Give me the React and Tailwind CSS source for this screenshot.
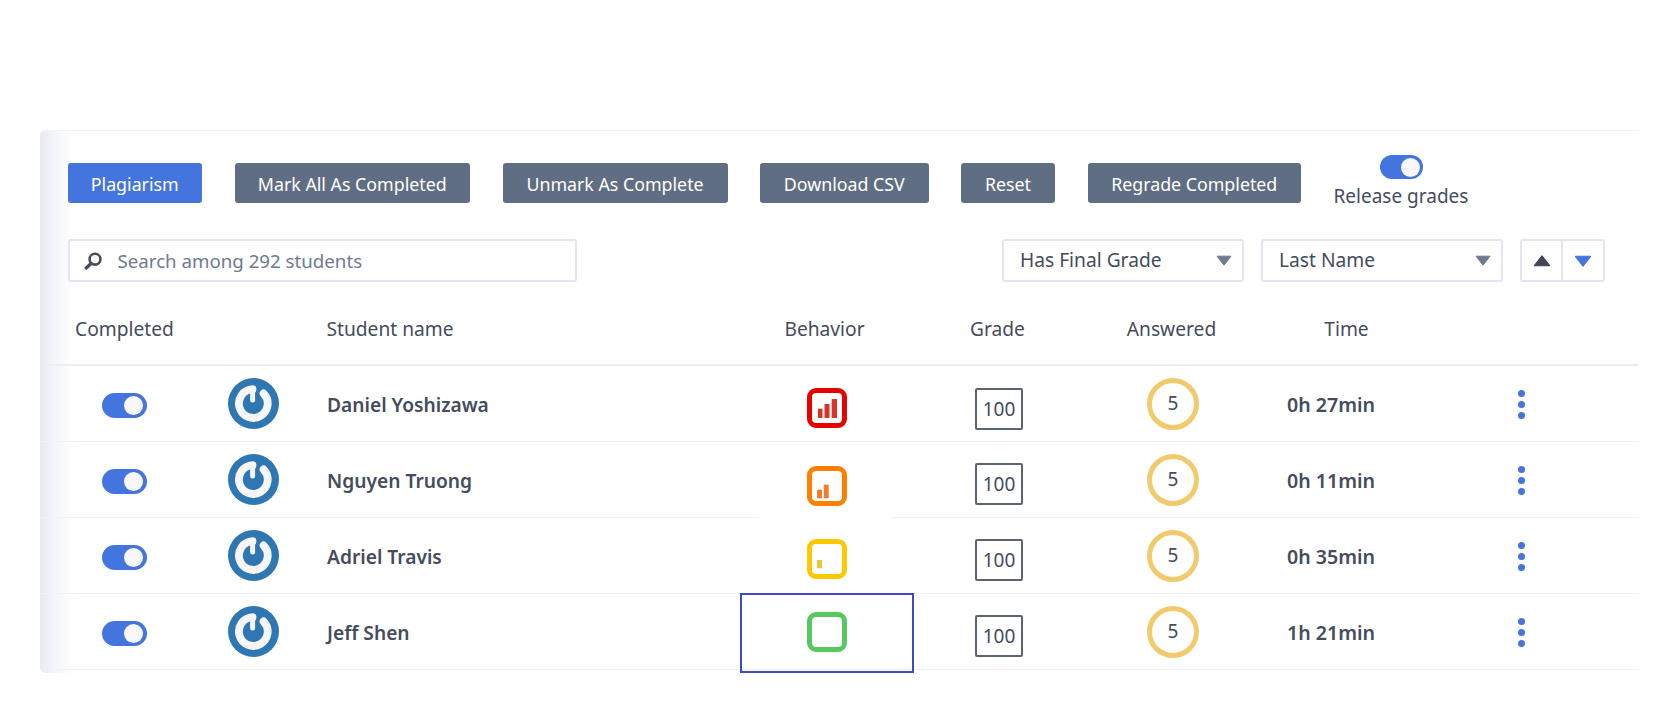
import React from "react";

function Toggle() {
  return (
    <div className="flex h-[25px] w-[45px] items-center justify-end rounded-full bg-[#4475df] pr-[4px]">
      <div className="h-[19px] w-[19px] rounded-full bg-[#f8f8fa]" />
    </div>
  );
}

function Gravatar() {
  return (
    <svg width="51" height="51" viewBox="0 0 51 51" className="block">
      <circle cx="25.5" cy="25.5" r="25.5" fill="#2e77b3" />
      <path d="M35.6 15.4 A14.4 14.4 0 1 1 24.6 11.1" fill="none" stroke="#f6f6f6" strokeWidth="7.8" strokeLinecap="round" />
      <path d="M24.6 10.5 L24.6 22" fill="none" stroke="#f6f6f6" strokeWidth="5" strokeLinecap="round" />
    </svg>
  );
}

function Behavior({ color, barColor, bars }) {
  return (
    <svg width="40" height="40" viewBox="0 0 40 40" className="block">
      <rect x="2.5" y="2.5" width="35" height="35" rx="6.5" fill="#fff" stroke={color} strokeWidth="5" />
      {bars.map((b, i) => (
        <rect key={i} x={b[0]} y={b[1]} width={b[2]} height={b[3]} fill={barColor} />
      ))}
    </svg>
  );
}

function Dots() {
  return (
    <div className="mt-[2px] flex flex-col gap-[4px]">
      <div className="h-[7px] w-[7px] rounded-full bg-[#4475df]" />
      <div className="h-[7px] w-[7px] rounded-full bg-[#4475df]" />
      <div className="h-[7px] w-[7px] rounded-full bg-[#4475df]" />
    </div>
  );
}

function Caret({ className }) {
  return (
    <svg width="16" height="11" viewBox="0 0 16 11" className={className}>
      <path d="M1 1.2 H15 L8 10.2 Z" fill="currentColor" stroke="currentColor" strokeWidth="1" strokeLinejoin="round" />
    </svg>
  );
}

function Btn({ w, blue, children }) {
  return (
    <button className={`flex h-[40px] items-center justify-center rounded-[3px] pt-[2px] text-[17.8px] text-white ${w} ${blue ? "bg-[#4475df]" : "bg-[#606e84]"}`}>
      {children}
    </button>
  );
}

function Select({ label }) {
  return (
    <div className="flex h-[43px] w-[242px] items-center justify-between rounded-[3px] border-2 border-[#e3e6f0] pl-[16px] pr-[10px] text-[19.2px] text-[#454c5b]">
      <span>{label}</span>
      <Caret className="text-[#6f7a90]" />
    </div>
  );
}

const rows = [
  {
    name: "Daniel Yoshizawa", time: "0h 27min", color: "#e60000", barColor: "#d9332a",
    bars: [[11, 20.7, 4.5, 9.3], [17.5, 16, 5, 14], [24.7, 11, 5.3, 19]],
    bMt: "mt-[8px]", gMt: "mt-[11px]",
  },
  {
    name: "Nguyen Truong", time: "0h 11min", color: "#ff7f00", barColor: "#ee7d33",
    bars: [[10, 23.7, 5, 8.6], [16.7, 18.7, 5, 13.6]],
    bMt: "mt-[13px]", gMt: "mt-[9px]", patch: true,
  },
  {
    name: "Adriel Travis", time: "0h 35min", color: "#fcc800", barColor: "#f2c33f",
    bars: [[10, 21, 5, 8.3]],
    bMt: "mt-[7px]", gMt: "mt-[9px]",
  },
  {
    name: "Jeff Shen", time: "1h 21min", color: "#56c85f", barColor: "#56c85f",
    bars: [],
    bMt: "mt-0", gMt: "mt-[9px]", selected: true,
  },
];

export default function App() {
  return (
    <div className="min-h-[713px] bg-white pl-[40px] pt-[130px] font-['Noto_Sans',sans-serif] text-[#454c5b]">
      <div className="flex h-[543px] w-[1599px] flex-col rounded-l-[6px] border-t border-[#f1f2f5] bg-[linear-gradient(90deg,#e8eaf1,#f6f7fa_18px,#ffffff_34px)] pt-[24px]">
        {/* toolbar */}
        <div className="flex h-[53px] items-start gap-[32.5px] pl-[27.5px]">
          <div className="mt-[8px] flex gap-[32.5px]">
            <Btn w="w-[134.5px]" blue>Plagiarism</Btn>
            <Btn w="w-[235.5px]">Mark All As Completed</Btn>
            <Btn w="w-[225px]">Unmark As Complete</Btn>
            <Btn w="w-[168.5px]">Download CSV</Btn>
            <Btn w="w-[94px]">Reset</Btn>
            <Btn w="w-[213.5px]">Regrade Completed</Btn>
          </div>
          <div className="flex w-[135px] flex-col items-center whitespace-nowrap">
            <div className="flex h-[24px] w-[43px] items-center justify-end rounded-full bg-[#4475df] pr-[3px]">
              <div className="h-[19px] w-[19px] rounded-full bg-[#f8f8fa]" />
            </div>
            <div className="mt-[4px] text-[19px] leading-[26px]">Release grades</div>
          </div>
        </div>

        {/* filters */}
        <div className="mt-[31px] flex h-[43px] items-center pl-[27.5px]">
          <div className="flex h-[43px] w-[509px] items-center rounded-[3px] border-2 border-[#e3e6f0] pl-[14px] text-[18.7px] text-[#6f7a90]">
            <svg width="19" height="18" viewBox="0 0 19 18" className="block">
              <circle cx="11" cy="7.2" r="5.4" fill="none" stroke="#454c5b" strokeWidth="2.6" />
              <path d="M7 11.5 L2.2 16" stroke="#454c5b" strokeWidth="3.2" strokeLinecap="round" />
            </svg>
            <span className="ml-[15px] pt-[1px]">Search among 292 students</span>
          </div>
          <div className="ml-[425.5px] flex gap-[17px]">
            <Select label="Has Final Grade" />
            <Select label="Last Name" />
            <div className="flex h-[43px] w-[85px] rounded-[3px] border-2 border-[#e3e6f0]">
              <div className="flex w-[41px] items-center justify-center border-r-2 border-[#e3e6f0]">
                <Caret className="h-[12px] w-[18px] rotate-180 text-[#3f4654]" />
              </div>
              <div className="flex flex-1 items-center justify-center">
                <Caret className="h-[12px] w-[18px] text-[#4475df]" />
              </div>
            </div>
          </div>
        </div>

        {/* table header */}
        <div className="flex h-[84px] shrink-0 items-center border-b-2 border-[#eceef3] pt-[13px] text-[19.2px]">
          <div className="w-[286.5px] pl-[35px]">Completed</div>
          <div className="w-[400px]">Student name</div>
          <div className="w-[196px] text-center">Behavior</div>
          <div className="w-[150px] text-center">Grade</div>
          <div className="w-[198px] text-center">Answered</div>
          <div className="w-[152px] text-center">Time</div>
        </div>

        {/* rows */}
        {rows.map((r) => (
          <div key={r.name} className="relative flex h-[76px] shrink-0 items-center border-b border-[#f1f2f5]">
            <div className="mt-[4px] w-[188px] pl-[62px]">
              <Toggle />
            </div>
            <div className="w-[99px]">
              <Gravatar />
            </div>
            <div className="mt-[3px] w-[400px] text-[19.2px] font-semibold">{r.name}</div>
            <div className={`flex w-[200px] justify-center ${r.bMt}`}>
              <Behavior color={r.color} barColor={r.barColor} bars={r.bars} />
            </div>
            <div className={`flex w-[144px] justify-center ${r.gMt}`}>
              <div className="flex h-[42px] w-[48px] items-center justify-center rounded-[2px] border-2 border-[#5b6472] text-[19px]">100</div>
            </div>
            <div className="flex w-[204px] justify-center">
              <div className="flex h-[52px] w-[52px] items-center justify-center rounded-full border-[5px] border-[#f2ca6e] text-[19px]">5</div>
            </div>
            <div className="mt-[3px] flex w-[112px] justify-center whitespace-nowrap text-[19.6px] font-semibold">{r.time}</div>
            <div className="ml-[131px]">
              <Dots />
            </div>
            {r.patch && <div className="absolute bottom-[-1px] left-[719px] h-[2px] w-[133px] bg-white" />}
            {r.selected && <div className="absolute left-[700px] top-[-1px] h-[80px] w-[174px] border-2 border-[#3f48cc]" />}
          </div>
        ))}
      </div>
    </div>
  );
}
